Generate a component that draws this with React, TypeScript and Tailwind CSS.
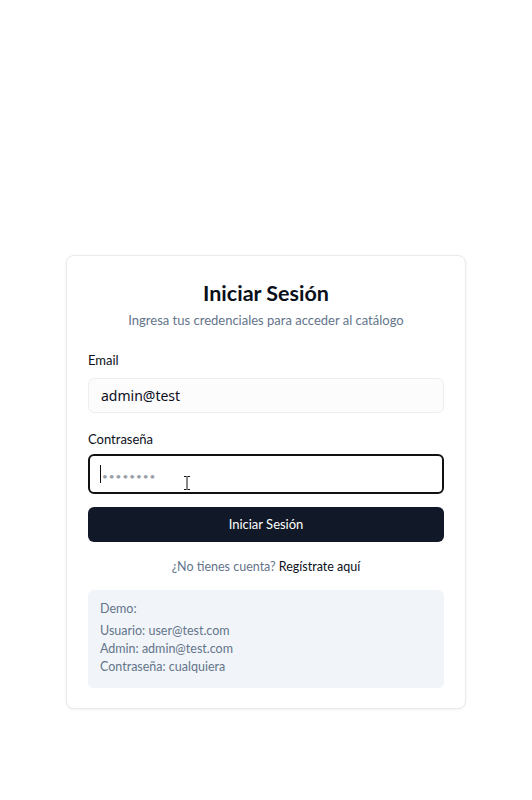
import React from 'react';

const font = { fontFamily: 'Lato, "Noto Sans", sans-serif' };

export default function App() {
    return (
        <div className="min-h-screen bg-white pt-[255px]" style={font}>
            <div className="mx-auto w-[400px] rounded-lg border border-[#e8eaee] bg-white px-[21px] pt-[24px] pb-[20px] shadow-[0_1px_3px_rgba(0,0,0,0.06)]">
                <div className="text-center">
                    <h1 className="text-[21.5px] font-bold leading-[26px] text-[#0b0f1a]">Iniciar Sesión</h1>
                    <p className="mt-[4px] text-[13px] leading-[20px] text-[#64748b]">
                        Ingresa tus credenciales para acceder al catálogo
                    </p>
                </div>

                <form className="mt-[21px] flex flex-col" onSubmit={(e) => e.preventDefault()}>
                    <label className="text-[13px] leading-[18px] text-[#0b0f1a]">Email</label>
                    <input
                        type="email"
                        defaultValue="admin@test"
                        className="mt-[9px] h-[35px] rounded-md border border-[#eceef2] bg-[#fcfcfd] px-3 text-[14px] text-[#0b0f1a] outline-none"
                        style={{ fontFamily: '"Noto Sans", sans-serif' }}
                    />

                    <label className="mt-[17px] text-[13px] leading-[18px] text-[#0b0f1a]">Contraseña</label>
                    <div className="relative mt-[6px]">
                        <input
                            type="password"
                            placeholder="••••••••"
                            className="h-[40px] w-full rounded-md border-2 border-[#111] bg-white px-3 text-[14px] tracking-[1px] text-[#0b0f1a] outline-none placeholder:text-[10px] placeholder:text-[#9aa0a8]"
                        />
                        <span className="absolute left-[12px] top-[11px] h-[18px] w-px bg-[#111]" />
                        <svg className="absolute left-[95px] top-[21px]" width="8" height="16" viewBox="0 0 8 16" fill="none" stroke="#111" strokeWidth="1">
                            <path d="M1 1.5h2.5M4.5 1.5H7M4 1.5v13M1 14.5h2.5M4.5 14.5H7" />
                        </svg>
                    </div>

                    <button
                        type="submit"
                        className="mt-[13px] h-[35px] rounded-md bg-[#111827] text-[13px] text-white"
                    >
                        Iniciar Sesión
                    </button>
                </form>

                <p className="mt-[16px] text-center text-[12.5px] leading-[18px] text-[#64748b]">
                    ¿No tienes cuenta? <a href="#" className="text-[#0b0f1a]">Regístrate aquí</a>
                </p>

                <div className="mt-[14px] rounded-md bg-[#f1f4f8] px-[12px] pt-[10px] pb-[12px] text-[12.5px] leading-[18px] text-[#64748b]">
                    <p>Demo:</p>
                    <p className="mt-[4px]">Usuario: user@test.com</p>
                    <p>Admin: admin@test.com</p>
                    <p>Contraseña: cualquiera</p>
                </div>
            </div>
        </div>
    );
}
